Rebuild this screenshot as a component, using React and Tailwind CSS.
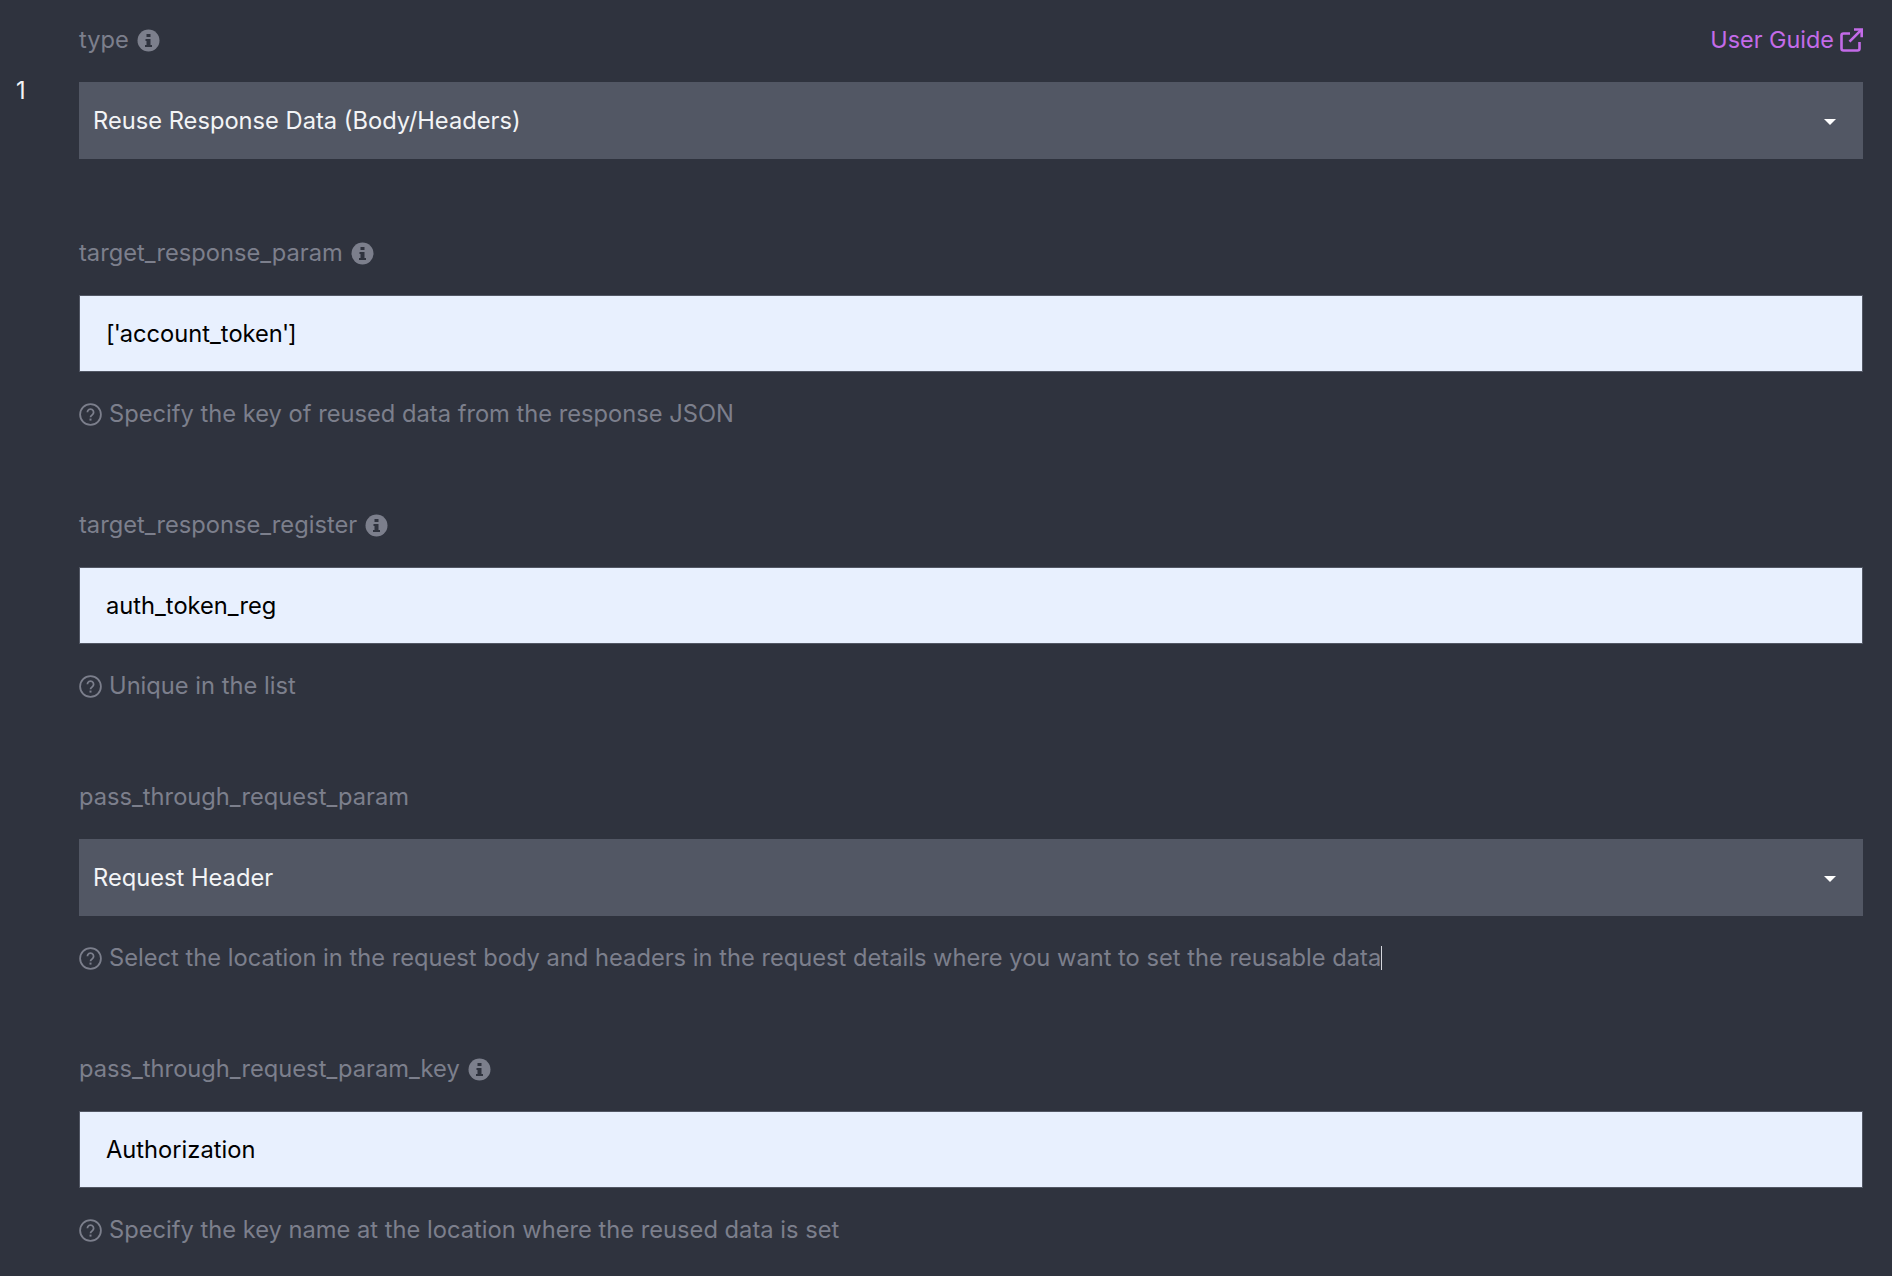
import React from 'react';

const font = "font-['Inter','Noto_Sans',sans-serif]";

function InfoDot() {
  return (
    <svg width="23" height="23" viewBox="0 0 23 23" className="shrink-0">
      <circle cx="11.5" cy="11.5" r="11" fill="#7c7f8c" />
      <rect x="9.5" y="5" width="4" height="3" fill="#2f333e" />
      <path d="M8.5 10h5v6h1.5v2h-7v-2h1.5v-4h-1z" fill="#2f333e" />
    </svg>
  );
}

function HelpIcon() {
  return (
    <svg width="23" height="23" viewBox="0 0 23 23" fill="none" className="shrink-0">
      <circle cx="11.5" cy="11.5" r="10.4" stroke="#7c7f8c" strokeWidth="1.8" />
      <path d="M8.4 9.2a3.1 3.1 0 1 1 4.7 2.7c-1 .6-1.6 1.1-1.6 2.3" stroke="#7c7f8c" strokeWidth="1.8" />
      <rect x="10.5" y="15.6" width="2" height="2" fill="#7c7f8c" />
    </svg>
  );
}

function GuideIcon() {
  return (
    <svg width="23" height="24" viewBox="0 0 23 24" fill="none" stroke="#c36be8" strokeWidth="2.6" className="shrink-0">
      <path d="M10 5.5H3.5a2 2 0 0 0-2 2v13a2 2 0 0 0 2 2h14a2 2 0 0 0 2-2V14" />
      <path d="M14 1.5h7.7v7.7" />
      <path d="M21.5 1.7 9.5 13.7" />
    </svg>
  );
}

function Label({ children, info }) {
  return (
    <div className="flex items-center gap-2 h-6 text-[#7c7f8c]">
      <span>{children}</span>
      {info && <InfoDot />}
    </div>
  );
}

function Help({ children, caret }) {
  return (
    <div className="flex items-center gap-[7px] h-6 mt-[30px] text-[#7c7f8c]">
      <HelpIcon />
      <span>{children}</span>
      {caret && <span className="w-px h-6 bg-[#d4d6dc] -ml-[7px]" />}
    </div>
  );
}

function SelectBox({ value }) {
  return (
    <div className="flex items-center justify-between h-[77px] mt-[30px] pl-[14px] pr-[27px] bg-[#525764] text-[#f3f4f6]">
      <span>{value}</span>
      <span className="w-0 h-0 mt-[3px] border-x-[6px] border-t-[6px] border-x-transparent border-t-white" />
    </div>
  );
}

function InputBox({ children }) {
  return (
    <div className="flex items-center h-[77px] mt-[30px] px-[26px] bg-[#e8f0fe] border border-[#525764] text-black">
      {children}
    </div>
  );
}

export default function App() {
  return (
    <div className={`${font} flex min-h-[1276px] bg-[#2f333e] text-[23.7px] leading-6 pr-[29px] overflow-hidden`}>
      <div className="w-[79px] shrink-0 pl-[16px] pt-[79px] text-[#f3f4f6]">1</div>
      <div className="flex-1 flex flex-col pt-[28px]">
        <div className="flex items-center justify-between">
          <Label info>type</Label>
          <a className="flex items-center gap-[6px] text-[#c36be8] text-[23.4px]">
            User Guide
            <GuideIcon />
          </a>
        </div>
        <SelectBox value="Reuse Response Data (Body/Headers)" />

        <div className="mt-[82px]">
          <Label info>target_response_param</Label>
          <InputBox>
            <span>[<span className="-mx-px">'</span>account_token<span className="-mx-px">'</span>]</span>
          </InputBox>
          <Help>Specify the key of reused data from the response JSON</Help>
        </div>

        <div className="mt-[87px]">
          <Label info>target_response_register</Label>
          <InputBox>auth_token_reg</InputBox>
          <Help>Unique in the list</Help>
        </div>

        <div className="mt-[87px]">
          <Label>pass_through_request_param</Label>
          <SelectBox value="Request Header" />
          <Help caret>Select the location in the request body and headers in the request details where you want to set the reusable data</Help>
        </div>

        <div className="mt-[87px]">
          <Label info>pass_through_request_param_key</Label>
          <InputBox>Authorization</InputBox>
          <Help>Specify the key name at the location where the reused data is set</Help>
        </div>
      </div>
    </div>
  );
}
